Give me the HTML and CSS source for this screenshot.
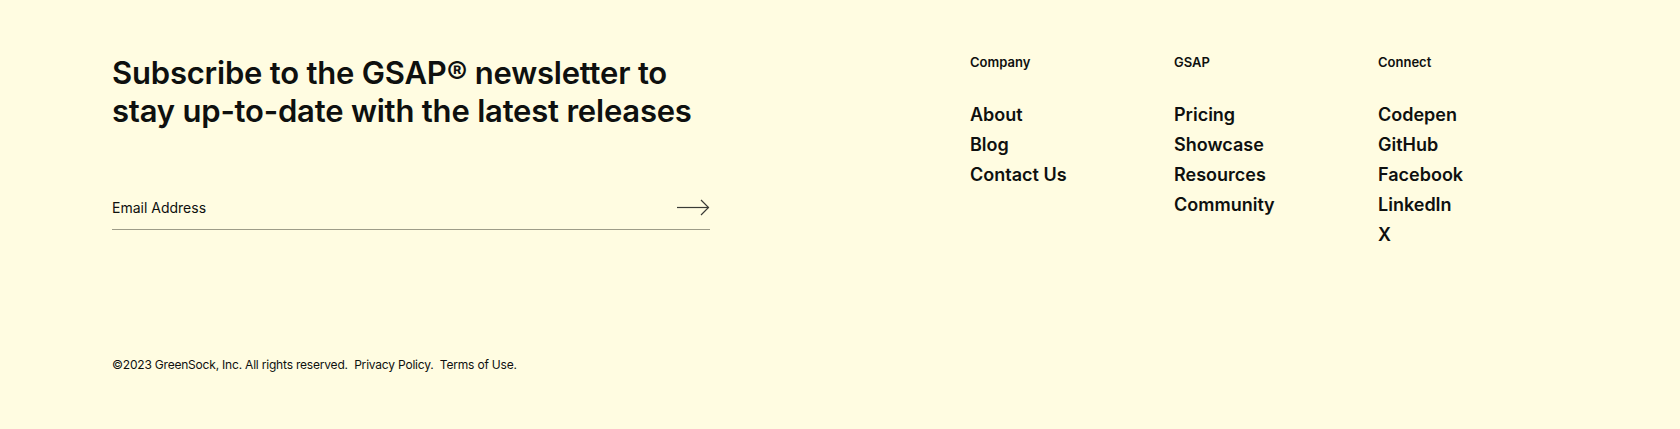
FILE: index.html
```html
<!DOCTYPE html>
<html lang="en">
<head>
	<meta charset="utf-8">
	<title>GSAP footer</title>
	<link rel="stylesheet" href="styles.css">
</head>
<body>
<footer class="site-footer">
	<div class="footer-top">
		<div class="newsletter">
			<h2 class="newsletter-title">Subscribe to the GSAP® newsletter to<br>stay up-to-date with the latest releases</h2>
			<form class="newsletter-form" onsubmit="return false;">
				<input class="newsletter-input" type="email" placeholder="Email Address">
				<button class="newsletter-submit" type="submit" aria-label="Subscribe">
					<svg width="34" height="18" viewBox="0 0 34 18" fill="none" stroke="currentColor" stroke-width="1.2">
						<path d="M1 9.5H32.5"/>
						<path d="M25 2L32.5 9.5L25 17"/>
					</svg>
				</button>
			</form>
		</div>
		<nav class="footer-nav">
			<div class="nav-col">
				<h3 class="nav-title">Company</h3>
				<ul class="nav-list">
					<li><a href="#">About</a></li>
					<li><a href="#">Blog</a></li>
					<li><a href="#">Contact Us</a></li>
				</ul>
			</div>
			<div class="nav-col">
				<h3 class="nav-title">GSAP</h3>
				<ul class="nav-list">
					<li><a href="#">Pricing</a></li>
					<li><a href="#">Showcase</a></li>
					<li><a href="#">Resources</a></li>
					<li><a href="#">Community</a></li>
				</ul>
			</div>
			<div class="nav-col">
				<h3 class="nav-title">Connect</h3>
				<ul class="nav-list">
					<li><a href="#">Codepen</a></li>
					<li><a href="#">GitHub</a></li>
					<li><a href="#">Facebook</a></li>
					<li><a href="#">LinkedIn</a></li>
					<li><a href="#">X</a></li>
				</ul>
			</div>
		</nav>
	</div>
	<p class="legal">©2023 GreenSock, Inc. All rights reserved.&nbsp; <a href="#">Privacy Policy.</a>&nbsp; <a href="#">Terms of Use.</a></p>
</footer>
</body>
</html>
```

FILE: styles.css
```css
body {
	margin: 0;
	background: #fffce1;
	color: #0e100f;
	font-family: Inter, "Noto Sans", sans-serif;
}
a {
	color: inherit;
	text-decoration: none;
}
.site-footer {
	height: 429px;
	box-sizing: border-box;
	padding: 54px 98px 0 112px;
}
.footer-top {
	display: flex;
	justify-content: space-between;
}
.newsletter {
	width: 598px;
}
.newsletter-title {
	margin: 0;
	font-size: 31px;
	line-height: 38px;
	font-weight: 600;
	letter-spacing: -0.2px;
}
.newsletter-form {
	display: flex;
	align-items: center;
	margin-top: 68px;
	border-bottom: 1px solid #9d9c88;
	padding-bottom: 13px;
}
.newsletter-input {
	flex: 1;
	border: 0;
	padding: 0;
	background: transparent;
	font-family: inherit;
	font-size: 14px;
	color: #0e100f;
}
.newsletter-input::placeholder {
	color: #0e100f;
}
.newsletter-input:focus {
	outline: none;
}
.newsletter-submit {
	border: 0;
	padding: 0;
	background: none;
	color: #3a3b36;
	display: flex;
}
.footer-nav {
	display: grid;
	grid-template-columns: repeat(3, 204px);
}
.nav-title {
	margin: 0 0 30px;
	font-size: 13px;
	line-height: 16px;
	font-weight: 600;
}
.nav-list {
	list-style: none;
	margin: 0;
	padding: 0;
}
.nav-list li {
	font-size: 18px;
	line-height: 30px;
	font-weight: 600;
}
.legal {
	margin: 107px 0 0;
	font-size: 12px;
	letter-spacing: -0.2px;
}
```
